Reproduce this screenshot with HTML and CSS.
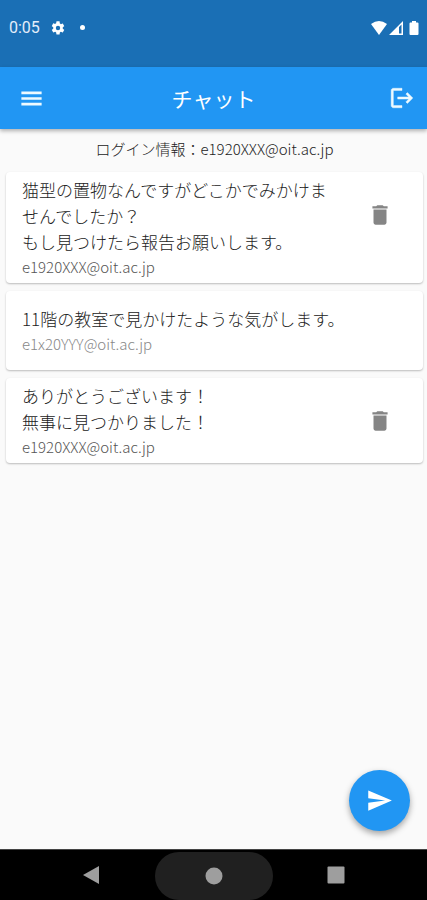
FILE: index.html
```html
<!DOCTYPE html>
<html lang="ja">
<head>
<meta charset="utf-8">
<meta name="viewport" content="width=device-width, initial-scale=1">
<title>チャット</title>
<link rel="stylesheet" href="styles.css">
</head>
<body>
<div class="status">
  <span class="clock">0:05</span>
  <svg class="gear" viewBox="0 0 24 24" width="16" height="16" aria-hidden="true"><path d="M19.14 12.94c.04-.3.06-.61.06-.94s-.02-.64-.07-.94l2.03-1.58a.49.49 0 0 0 .12-.61l-1.92-3.32a.49.49 0 0 0-.59-.22l-2.39.96a7 7 0 0 0-1.62-.94l-.36-2.54A.48.48 0 0 0 13.92 2h-3.84a.48.48 0 0 0-.47.41l-.36 2.54a7 7 0 0 0-1.62.94l-2.39-.96a.48.48 0 0 0-.59.22L2.74 8.87a.48.48 0 0 0 .12.61l2.03 1.58a6 6 0 0 0 0 1.88l-2.03 1.58a.49.49 0 0 0-.12.61l1.92 3.32c.12.22.37.29.59.22l2.39-.96c.5.38 1.03.7 1.62.94l.36 2.54c.05.24.24.41.48.41h3.84c.24 0 .44-.17.47-.41l.36-2.54a7 7 0 0 0 1.62-.94l2.39.96c.22.08.47 0 .59-.22l1.92-3.32a.48.48 0 0 0-.12-.61zM12 15.3a3.3 3.3 0 1 1 0-6.6 3.3 3.3 0 0 1 0 6.6z"/></svg>
  <span class="dot"></span>
  <span class="signals">
    <svg viewBox="0 0 16 14" width="16" height="14" aria-hidden="true"><path d="M0 3Q8-3 16 3L8 14z"/></svg>
    <svg viewBox="0 0 16 14" width="16" height="14" aria-hidden="true"><path fill-rule="evenodd" d="M0 14L14 0V14zM10 6V12.500H12.500V3.500z"/></svg>
    <svg class="battery" viewBox="0 0 10 14" width="10" height="14" aria-hidden="true"><path d="M3 0H7V1.500H8.500Q9.500 1.500 9.500 2.500V13Q9.500 14 8.500 14H1.500Q.5 14 .5 13V2.500Q.5 1.500 1.500 1.500H3z"/></svg>
  </span>
</div>
<header class="appbar">
  <button class="icon" aria-label="メニュー"><svg viewBox="0 0 24 24" width="27" height="27"><path d="M3 18.200h18v-2.400H3zm0-5h18v-2.400H3zm0-7.400v2.400h18V5.800z"/></svg></button>
  <h1>チャット</h1>
  <button class="icon logout" aria-label="ログアウト"><svg viewBox="0 0 24 24" width="26" height="26"><path d="M17 7l-1.410 1.410L18.170 11H8v2h10.170l-2.580 2.580L17 17l5-5zM4 5h8V3H4c-1.100 0-2 .9-2 2v14c0 1.100.9 2 2 2h8v-2H4z"/></svg></button>
</header>
<main>
  <p class="login">ログイン情報：e1920XXX@oit.ac.jp</p>
  <ul class="messages">
    <li class="card">
      <div class="body">
        <p class="text">猫型の置物なんですがどこかでみかけま<br>せんでしたか？<br>もし見つけたら報告お願いします。</p>
        <p class="mail">e1920XXX@oit.ac.jp</p>
      </div>
      <button class="delete" aria-label="削除"><svg viewBox="0 0 24 24" width="26" height="26"><path d="M6 19c0 1.100.9 2 2 2h8c1.100 0 2-.9 2-2V7H6zM19 4h-3.500l-1-1h-5l-1 1H5v2h14z"/></svg></button>
    </li>
    <li class="card">
      <div class="body">
        <p class="text">11階の教室で見かけたような気がします。</p>
        <p class="mail other">e1x20YYY@oit.ac.jp</p>
      </div>
    </li>
    <li class="card">
      <div class="body">
        <p class="text">ありがとうございます！<br>無事に見つかりました！</p>
        <p class="mail">e1920XXX@oit.ac.jp</p>
      </div>
      <button class="delete" aria-label="削除"><svg viewBox="0 0 24 24" width="26" height="26"><path d="M6 19c0 1.100.9 2 2 2h8c1.100 0 2-.9 2-2V7H6zM19 4h-3.500l-1-1h-5l-1 1H5v2h14z"/></svg></button>
    </li>
  </ul>
  <button class="send" aria-label="送信"><svg viewBox="0 0 24 24" width="27" height="27"><path d="M2.010 21L23 12 2.010 3 2 10l15 2-15 2z"/></svg></button>
</main>
<nav class="sysnav">
  <button aria-label="戻る"><svg viewBox="0 0 18 20" width="18" height="20"><path d="M1 10L17 1V19z"/></svg></button>
  <button class="home" aria-label="ホーム"><svg viewBox="0 0 18 18" width="18" height="18"><circle cx="9" cy="9" r="8.500"/></svg></button>
  <button aria-label="履歴"><svg viewBox="0 0 18 18" width="18" height="18"><rect x=".5" y=".5" width="17" height="17" rx="1"/></svg></button>
</nav>
</body>
</html>
```
FILE: styles.css
```css
* {
  box-sizing: border-box;
}

body {
  margin: 0;
  min-height: 100vh;
  display: flex;
  flex-direction: column;
  background: #fafafa;
  color: #222;
  font-family: "Noto Sans CJK JP", sans-serif;
  font-weight: 300;
}

h1, p, ul {
  margin: 0;
  padding: 0;
}

button {
  border: 0;
  padding: 0;
  background: none;
  color: inherit;
  display: flex;
  align-items: center;
  justify-content: center;
}

svg {
  display: block;
  fill: currentColor;
}

.status {
  height: 67px;
  padding: 0 8px 12px 9px;
  display: flex;
  align-items: center;
  background: #1a6fb5;
  color: #fff;
}

.clock {
  font: 400 16px/20px Roboto, sans-serif;
  color: #e3edfa;
}

.gear {
  margin-left: 10px;
}

.dot {
  width: 5px;
  height: 5px;
  margin-left: 14px;
  border-radius: 50%;
  background: #fff;
}

.signals {
  margin-left: auto;
  display: flex;
  gap: 2px;
}

.battery {
  margin-left: 2px;
}

.appbar {
  height: 62px;
  padding: 0 12px;
  display: grid;
  grid-template-columns: 38px 1fr 38px;
  align-items: center;
  background: #2196f3;
  color: #fff;
  box-shadow: 0 2px 4px rgba(0, 0, 0, 0.3);
}

.appbar h1 {
  font-size: 21px;
  line-height: 30px;
  font-weight: 400;
  text-align: center;
}

.icon {
  height: 38px;
  color: #eefaff;
}

.logout {
  justify-content: flex-end;
  stroke: currentColor;
  stroke-width: 0.4;
}

main {
  flex: 1;
  display: flex;
  flex-direction: column;
  padding: 8px 4px 18px 6px;
}

.login {
  font-size: 15px;
  line-height: 24px;
  text-align: center;
}

.messages {
  margin-top: 11px;
  display: flex;
  flex-direction: column;
  gap: 8px;
  list-style: none;
}

.card {
  min-height: 79px;
  padding: 5px 30px 4px 16px;
  display: flex;
  align-items: center;
  justify-content: space-between;
  border-radius: 4px;
  background: #fff;
  box-shadow: 0 1px 2px rgba(0, 0, 0, 0.25);
}

.text {
  font-size: 17px;
  line-height: 26px;
  white-space: nowrap;
}

.mail {
  font-size: 15px;
  line-height: 24px;
  color: #555;
}

.mail.other {
  color: #888;
}

.delete {
  align-self: flex-start;
  width: 27px;
  height: 76px;
  color: #858585;
}

.send {
  width: 61px;
  height: 61px;
  margin: auto 13px 0 auto;
  border-radius: 50%;
  background: #2196f3;
  color: #fff;
  box-shadow: 0 3px 6px rgba(0, 0, 0, 0.35);
}

.sysnav {
  height: 51px;
  padding: 0 28px;
  display: grid;
  grid-template-columns: 1fr 118px 1fr;
  border-top: 1px solid #444;
  background: #000;
  color: #9e9e9e;
}

.sysnav .home {
  margin-top: 2px;
  border-radius: 28px;
  background: #202020;
}
```
